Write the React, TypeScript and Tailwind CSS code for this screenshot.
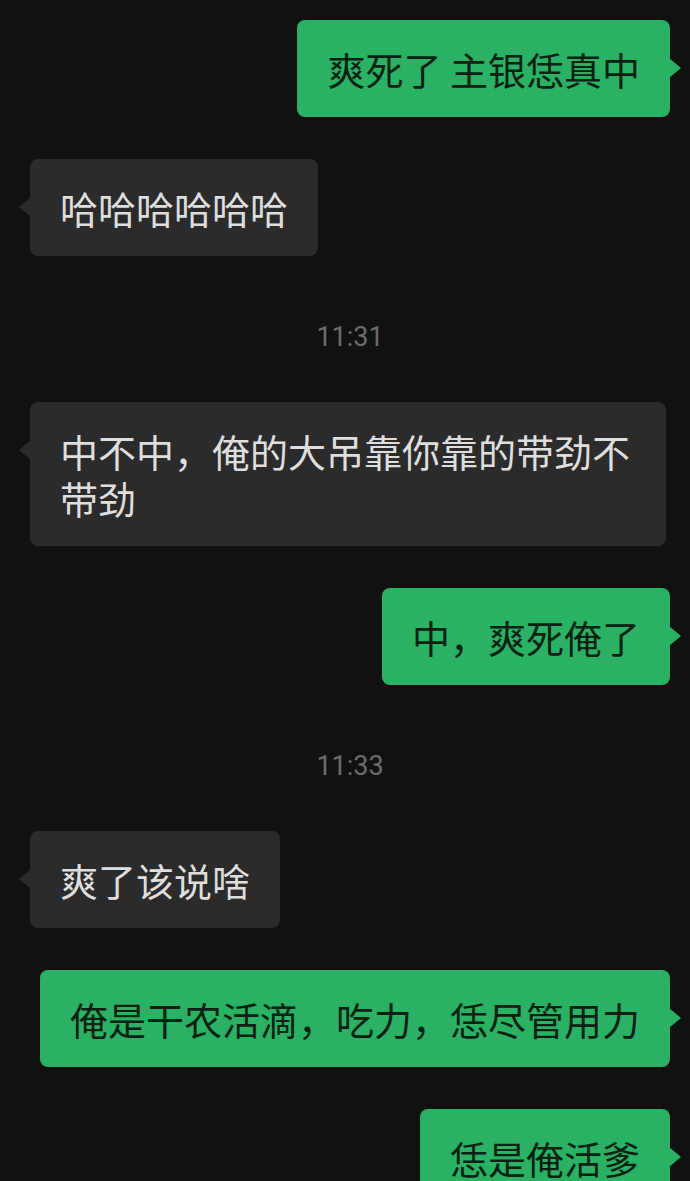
import type { ReactNode } from 'react';

type Msg =
  | { kind: 'time'; text: string }
  | { kind: 'in' | 'out'; text: string };

const messages: Msg[] = [
  { kind: 'out', text: '爽死了 主银恁真中' },
  { kind: 'in', text: '哈哈哈哈哈哈' },
  { kind: 'time', text: '11:31' },
  { kind: 'in', text: '中不中，俺的大吊靠你靠的带劲不带劲' },
  { kind: 'out', text: '中，爽死俺了' },
  { kind: 'time', text: '11:33' },
  { kind: 'in', text: '爽了该说啥' },
  { kind: 'out', text: '俺是干农活滴，吃力，恁尽管用力' },
  { kind: 'out', text: '恁是俺活爹' },
];

function Bubble({ side, children }: { side: 'in' | 'out'; children: ReactNode }) {
  const isOut = side === 'out';
  return (
    <div className={isOut ? 'flex justify-end pr-[20px]' : 'flex justify-start pl-[30px]'}>
      <div
        className={
          isOut
            ? 'relative max-w-[638px] rounded-[8px] bg-[#2ab163] px-[30px] py-[25px] text-[#0b2213]'
            : 'relative max-w-[636px] rounded-[8px] bg-[#2b2b2b] px-[30px] py-[25px] text-[#dedede]'
        }
      >
        {isOut ? (
          <span className="absolute right-[-11px] top-[38px] h-0 w-0 border-y-[10px] border-l-[12px] border-y-transparent border-l-[#2ab163]" />
        ) : (
          <span className="absolute left-[-11px] top-[38px] h-0 w-0 border-y-[10px] border-r-[12px] border-y-transparent border-r-[#2b2b2b]" />
        )}
        <p className="text-[38px] leading-[47px] [font-family:'Noto_Sans_CJK_SC','Noto_Sans',sans-serif]">
          {children}
        </p>
      </div>
    </div>
  );
}

export default function App() {
  return (
    <div className="h-[1181px] w-full overflow-hidden bg-[#111111]">
      <div className="flex flex-col gap-[42px] pt-[20px]">
        {messages.map((m, i) =>
          m.kind === 'time' ? (
            <div
              key={i}
              className="mb-[8px] mt-[24px] pl-[10px] text-center text-[27px] leading-[30px] text-[#6c6c6c] [font-family:Roboto,'Liberation_Sans',sans-serif]"
            >
              {m.text}
            </div>
          ) : (
            <Bubble key={i} side={m.kind}>
              {m.text}
            </Bubble>
          )
        )}
      </div>
    </div>
  );
}
